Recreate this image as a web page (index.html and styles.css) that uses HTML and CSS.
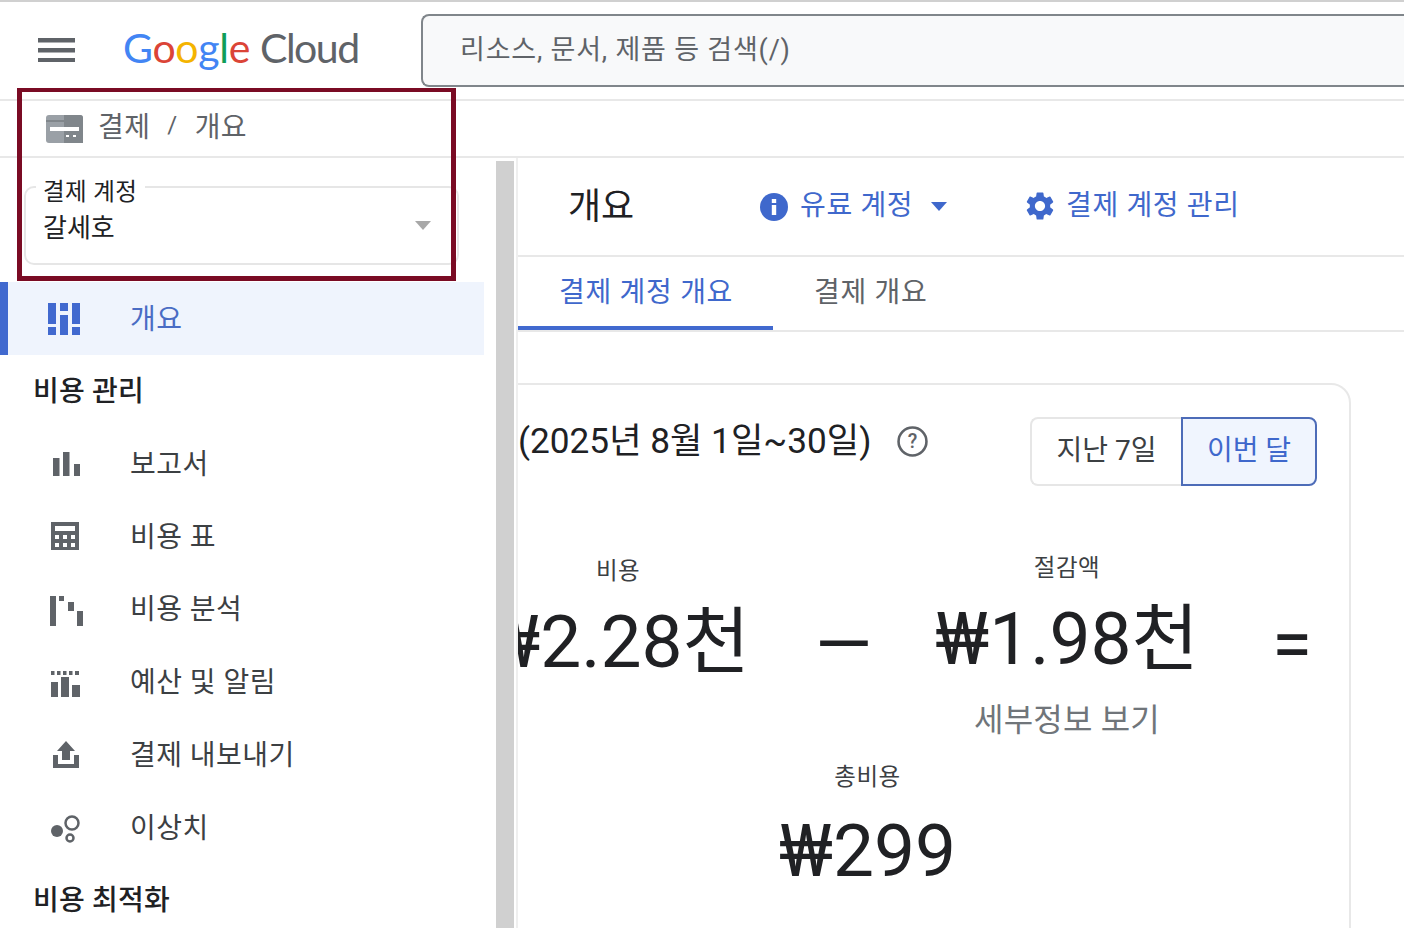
FILE: index.html
```html
<!DOCTYPE html>
<html lang="ko">
<head>
<meta charset="utf-8">
<title>결제 개요</title>
<link rel="stylesheet" href="styles.css">
</head>
<body>
<div class="page">
  <header class="topbar">
    <svg class="menu-icon" viewBox="0 0 37 24"><path d="M0 0h37v4.500H0zM0 10h37v4.500H0zM0 20h37v4.500H0z"/></svg>
    <div class="logo"><span class="g-blue">G</span><span class="g-red">o</span><span class="g-yellow">o</span><span class="g-blue">g</span><span class="g-green">l</span><span class="g-red">e</span><span class="logo-cloud">Cloud</span></div>
    <div class="search">리소스, 문서, 제품 등 검색(/)</div>
  </header>
  <div class="crumbs">
    <svg class="card-icon" viewBox="0 0 37 28"><rect width="37" height="28" rx="3" fill="#9aa0a6"/><path d="M18 0h16a3 3 0 0 1 3 3v25H18z" fill="#80868b"/><path d="M0 5h37v2H0z" fill="#80868b"/><rect x="4" y="12" width="29" height="4" fill="#fff"/><rect x="20" y="20" width="3" height="2" fill="#fff"/><rect x="27" y="20" width="3" height="2" fill="#fff"/></svg>
    <span class="crumb">결제</span><span class="crumb crumb-sep">/</span><span class="crumb">개요</span>
  </div>
  <div class="main">
    <nav class="sidebar">
      <div class="select-wrap">
        <div class="select-field">
          <span class="select-label">결제 계정</span>
          <span class="select-value">갈세호</span>
          <span class="select-arrow"></span>
        </div>
      </div>
      <a class="nav-item active">
        <span class="nav-icon"><svg viewBox="0 0 34 34" width="34" height="34"><path d="M1 1h8v21H1zM1 25h8v8H1zM13 1h8v8h-8zM13 13h8v20h-8zM25 1h8v21h-8zM25 25h8v8h-8z"/></svg></span>
        <span class="nav-text">개요</span>
      </a>
      <div class="nav-head">비용 관리</div>
      <a class="nav-item">
        <span class="nav-icon"><svg viewBox="0 0 34 34" width="34" height="34"><path d="M4 10h6.500v18H4zM14 4h6.500v24H14zM25 16h6v12h-6z"/></svg></span>
        <span class="nav-text">보고서</span>
      </a>
      <a class="nav-item">
        <span class="nav-icon"><svg viewBox="0 0 34 34" width="34" height="34"><path fill-rule="evenodd" d="M2 1h28v28H2zM6 5v5h20V5zM6 14v4h4v-4zM14 14v4h4v-4zM22 14v4h4v-4zM6 22v4h4v-4zM14 22v4h4v-4zM22 22v4h4v-4z"/></svg></span>
        <span class="nav-text">비용 표</span>
      </a>
      <a class="nav-item">
        <span class="nav-icon"><svg viewBox="0 0 34 34" width="34" height="34"><path d="M1 2h6v30H1zM10 2h5v5h-5zM19 8h6v9h-6zM28 17h6v15h-6z"/></svg></span>
        <span class="nav-text">비용 분석</span>
      </a>
      <a class="nav-item">
        <span class="nav-icon"><svg viewBox="0 0 34 34" width="34" height="34"><path d="M2 4h3.500v4H2zM8 4h3.500v4H8zM14 4h3.500v4H14zM20 4h3.500v4H20zM26 4h4v4h-4zM2 15h7v15H2zM12 10h8v20h-8zM23 18h8v12h-8z"/></svg></span>
        <span class="nav-text">예산 및 알림</span>
      </a>
      <a class="nav-item">
        <span class="nav-icon"><svg viewBox="0 0 34 34" width="34" height="34"><path d="M17 1l9 10h-5v9h-8v-9H8zM4 15h5v9h16v-9h5v13H4z"/></svg></span>
        <span class="nav-text">결제 내보내기</span>
      </a>
      <a class="nav-item">
        <span class="nav-icon"><svg viewBox="0 0 34 34" width="34" height="34"><circle cx="8" cy="19" r="6"/><circle cx="23" cy="11" r="6.500" fill="none" stroke="#5f6368" stroke-width="2.500"/><circle cx="21" cy="26" r="3.500" fill="none" stroke="#5f6368" stroke-width="2.500"/></svg></span>
        <span class="nav-text">이상치</span>
      </a>
      <div class="nav-head">비용 최적화</div>
    </nav>
    <div class="scroll-track"><div class="scroll-thumb"></div></div>
    <section class="content">
      <div class="content-head">
        <h1 class="page-title">개요</h1>
        <a class="head-link account">
          <svg class="head-icon" viewBox="0 0 28 28"><circle cx="14" cy="14" r="14" fill="#3f68cc"/><rect x="11.800" y="12" width="4.400" height="10" fill="#fff"/><rect x="11.800" y="6" width="4.400" height="4" fill="#fff"/></svg>
          <span class="head-text">유료 계정</span>
          <span class="link-arrow"></span>
        </a>
        <a class="head-link manage">
          <svg class="head-icon" viewBox="0 0 24 24"><path fill="#3f68cc" d="M19.14 12.94c.04-.3.06-.61.06-.94 0-.32-.02-.64-.07-.94l2.03-1.58a.49.49 0 0 0 .12-.61l-1.92-3.32a.488.488 0 0 0-.59-.22l-2.39.96c-.5-.38-1.03-.7-1.62-.94l-.36-2.54a.484.484 0 0 0-.48-.41h-3.84c-.24 0-.43.17-.47.41l-.36 2.54c-.59.24-1.13.57-1.62.94l-2.39-.96c-.22-.08-.47 0-.59.22L2.74 8.870c-.12.21-.08.47.12.61l2.03 1.58c-.05.3-.09.63-.09.94s.02.64.07.94l-2.03 1.58a.49.49 0 0 0-.12.61l1.92 3.32c.12.22.37.29.59.22l2.39-.96c.5.38 1.03.7 1.62.94l.36 2.54c.05.24.24.41.48.41h3.84c.24 0 .44-.17.47-.41l.36-2.54c.59-.24 1.13-.56 1.62-.94l2.39.96c.22.08.47 0 .59-.22l1.92-3.32c.12-.22.07-.47-.12-.61l-2.01-1.58zM12 15.600c-1.98 0-3.6-1.62-3.6-3.6s1.62-3.6 3.6-3.6 3.6 1.62 3.6 3.6-1.62 3.6-3.6 3.6z"/></svg>
          <span class="head-text">결제 계정 관리</span>
        </a>
      </div>
      <div class="tabs">
        <a class="tab active">결제 계정 개요</a>
        <a class="tab">결제 개요</a>
      </div>
      <div class="card">
        <div class="card-head">
          <div class="card-title">(2025년 8월 1일~30일)
            <svg class="help-icon" viewBox="0 0 30 30"><circle cx="15" cy="15" r="13.500" fill="none" stroke="#5f6368" stroke-width="2.500"/><text x="15" y="21.500" text-anchor="middle" class="help-q">?</text></svg>
          </div>
          <div class="toggle">
            <button class="toggle-btn">지난 7일</button>
            <button class="toggle-btn on">이번 달</button>
          </div>
        </div>
        <div class="metrics">
          <div class="metric cost">
            <div class="metric-label">비용</div>
            <div class="metric-value">₩2.28천</div>
          </div>
          <div class="operator minus">—</div>
          <div class="metric saving">
            <div class="metric-label">절감액</div>
            <div class="metric-value">₩1.98천</div>
            <div class="metric-note">세부정보 보기</div>
          </div>
          <div class="operator equals">=</div>
        </div>
        <div class="total">
          <div class="metric-label">총비용</div>
          <div class="metric-value">₩299</div>
        </div>
      </div>
    </section>
  </div>
  <div class="highlight"></div>
</div>
</body>
</html>
```

FILE: styles.css
```css
* { box-sizing: border-box; }
html, body { margin: 0; height: 100%; overflow: hidden; }
body {
  font-family: Roboto, "Noto Sans CJK KR", sans-serif;
  color: #202124;
  background: #fff;
  font-size: 26px;
}
a { color: inherit; text-decoration: none; }
.page { position: relative; width: 1404px; height: 928px; overflow: hidden; display: flex; flex-direction: column; border-top: 2px solid #d0d0d0; }

.topbar { height: 99px; flex: none; display: flex; align-items: flex-start; border-bottom: 2px solid #e8e8e8; }
.menu-icon { width: 37px; height: 24px; margin: 36px 0 0 38px; fill: #5f6368; flex: none; }
.logo { width: 298px; margin: 21px 0 0 48px; font-family: Lato, sans-serif; font-size: 41px; line-height: 50px; letter-spacing: -0.3px; flex: none; white-space: nowrap; }
.g-blue { color: #4285f4; }
.g-red { color: #db4437; }
.g-yellow { color: #f4b400; }
.g-green { color: #0f9d58; }
.logo-cloud { color: #5f6368; margin-left: 10px; letter-spacing: -1.500px; }
.search { flex: 1; height: 73px; margin: 12px 0 0 0; padding-left: 37px; background: #f8f9fa; border: 2px solid #80868b; border-right: 0; border-radius: 8px 0 0 8px; color: #5f6368; font-size: 27px; letter-spacing: 0.800px; line-height: 69px; }

.crumbs { height: 57px; flex: none; display: flex; align-items: center; padding-left: 46px; border-bottom: 2px solid #e8e8e8; color: #5f6368; font-size: 28px; letter-spacing: 0.400px; }
.card-icon { width: 37px; height: 28px; margin-right: 15px; }
.crumb { padding-bottom: 7px; }
.crumb-sep { margin: 0 17px; font-size: 24px; }

.main { flex: 1; display: flex; min-height: 0; }
.sidebar { width: 496px; flex: none; padding-right: 12px; }
.select-wrap { height: 124px; padding: 28px 0 0 24px; }
.select-field { position: relative; width: 435px; height: 79px; border: 2px solid #e6e6e6; border-radius: 10px; padding: 23px 0 0 17px; }
.select-label { position: absolute; left: 10px; top: -11px; padding: 0 8px 0 7px; background: #fff; font-size: 23.500px; letter-spacing: 0.400px; line-height: 30px; }
.select-value { display: block; font-size: 26px; line-height: 34px; }
.select-arrow { position: absolute; right: 26px; top: 33px; border: 8px solid transparent; border-top: 9px solid #a8a8a8; border-bottom: 0; }

.nav-item { display: flex; align-items: center; height: 72.800px; padding-left: 49px; font-size: 28px; letter-spacing: 0.450px; color: #3c4043; }
.nav-item.active { background: #eff4fd; border-left: 8px solid #4169cf; padding-left: 39px; color: #4a6cc4; height: 73px; }
.nav-icon { width: 81px; flex: none; height: 34px; display: block; margin-top: 4px; }
.nav-item.active .nav-icon { width: 83px; margin-top: 0; }
.nav-icon svg { display: block; fill: #5f6368; }
.nav-item.active svg { fill: #4169cf; }
.nav-text { padding-bottom: 3px; }
.nav-head { height: 72px; padding-left: 33px; font-size: 28px; font-weight: 500; letter-spacing: 0.200px; line-height: 74px; color: #202124; }

.scroll-track { width: 18px; flex: none; padding-top: 3px; }
.scroll-thumb { height: 100%; background: #d0d0d0; }

.content { flex: 1; min-width: 0; margin-left: 2px; border-left: 2px solid #efefef; overflow: hidden; }
.content-head { height: 99px; display: flex; align-items: center; border-bottom: 2px solid #e8e8e8; color: #3f68cc; font-size: 28px; letter-spacing: 0.650px; }
.page-title { margin: 0 0 8px 50px; width: 192px; font-size: 36px; font-weight: 400; color: #202124; flex: none; letter-spacing: 0; }
.head-link { display: flex; align-items: center; flex: none; }
.head-text { padding-bottom: 8px; }
.head-icon { width: 28px; height: 28px; margin-right: 12px; }
.account { width: 266px; }
.manage .head-icon { width: 34px; height: 34px; margin-right: 9px; margin-left: -3px; margin-bottom: 2px; }
.link-arrow { margin-left: 18px; border: 8px solid transparent; border-top: 9px solid #3f68cc; border-bottom: 0; }

.tabs { height: 75px; display: flex; border-bottom: 2px solid #e8e8e8; font-size: 28px; letter-spacing: 0.700px; }
.tab { height: 73px; padding: 0 41px; line-height: 72px; color: #5f6368; white-space: nowrap; }
.tab.active { width: 255px; color: #3f68cc; border-bottom: 4px solid #4169cf; }

.card { width: 967px; height: 700px; margin: 51px 0 0 -134px; border: 2px solid #e8e8e8; border-radius: 20px; padding: 32px 32px 0 132px; }
.card-head { display: flex; justify-content: space-between; align-items: flex-start; }
.card-title { display: flex; align-items: center; gap: 26px; font-size: 35.200px; line-height: 48px; color: #202124; white-space: nowrap; }
.help-icon { width: 31px; height: 31px; }
.help-q { font-family: Roboto, sans-serif; font-size: 19px; font-weight: 500; fill: #5f6368; }
.toggle { display: flex; height: 69px; }
.toggle-btn { font: inherit; height: 69px; background: #fff; color: #3c4043; border: 2px solid #e6e6e6; border-right: 0; border-radius: 8px 0 0 8px; width: 151px; font-size: 28px; letter-spacing: 0; padding: 0 0 7px; }
.toggle-btn.on { width: 136px; background: #f0f5fe; color: #3f68cc; border: 2px solid #4d6cb8; border-radius: 0 8px 8px 0; }

.metrics { height: 206px; margin: 68px 0 0 -132px; display: flex; align-items: flex-start; }
.metric { text-align: center; flex: none; }
.metric-label { font-size: 23.500px; letter-spacing: 0.500px; line-height: 34px; color: #3c4043; margin-bottom: 11px; }
.metric-value { font-size: 73px; line-height: 86px; color: #202124; white-space: nowrap; }
.metric-note { font-size: 32px; letter-spacing: 0.200px; line-height: 46px; color: #70757a; margin-top: 15px; }
.cost { width: 400px; margin-left: 32px; }
.saving { width: 300px; margin-top: -3px; }
.operator { font-size: 73px; flex: none; text-align: center; line-height: 86px; color: #202124; margin-top: 47px; }
.minus { width: 50px; margin-left: -3px; margin-right: 52px; }
.equals { width: 50px; margin-left: 50px; }
.total { margin: 0 -32px 0 -132px; text-align: center; }
.total .metric-label { margin-bottom: 14px; }

.highlight { position: absolute; left: 17px; top: 86px; width: 439px; height: 193px; border: 5px solid #7a0b24; border-top-width: 4px; }
```
